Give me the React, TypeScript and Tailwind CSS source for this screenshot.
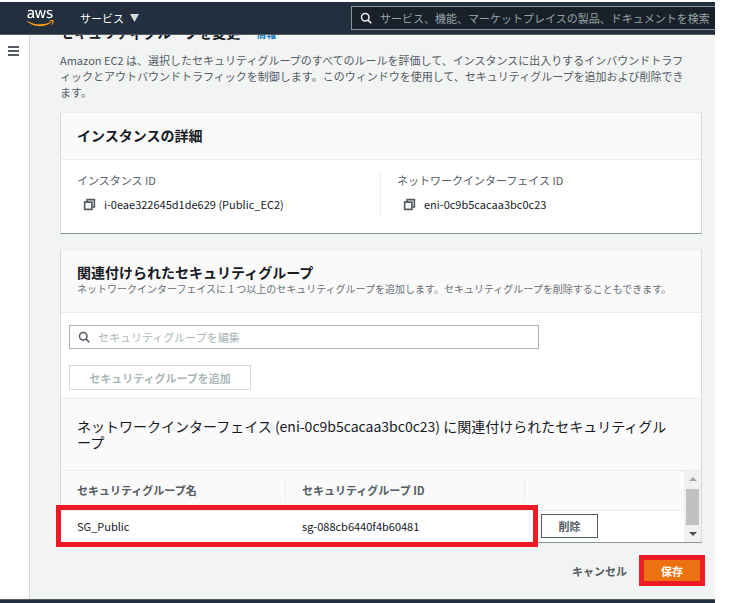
import type { ReactNode } from 'react';
import { FaAws } from 'react-icons/fa';

function SearchIcon({ className }: { className: string }) {
  return (
    <svg viewBox="0 0 16 16" className={className} fill="none" stroke="currentColor" strokeWidth="2" aria-hidden="true">
      <circle cx="7" cy="7" r="5" />
      <path d="M10.8 10.8 15 15" strokeWidth="2.2" />
    </svg>
  );
}

function CopyIcon() {
  return (
    <svg viewBox="0 0 16 16" className="size-[13px]" fill="none" stroke="currentColor" strokeWidth="2" aria-hidden="true">
      <path d="M2 5h9v9H2z" />
      <path d="M5 5V2h9v9h-3" />
    </svg>
  );
}

function Detail({ label, value }: { label: string; value: string }) {
  return (
    <div>
      <dt className="text-[#545b64]">{label}</dt>
      <dd className="mt-2 flex items-center gap-2 pl-[6px] text-[#16191f]">
        <button type="button" aria-label="コピー" className="text-[#545b64]">
          <CopyIcon />
        </button>
        {value}
      </dd>
    </div>
  );
}

function Card({ header, children }: { header: ReactNode; children: ReactNode }) {
  return (
    <section className="border border-t-[#eaeded] border-r-[#d5dbdb] border-b-[#879596] border-l-[#d5dbdb] bg-white">
      <div className="border-b border-[#eaeded] bg-[#fafafa] px-4 pt-[13px] pb-[15px]">{header}</div>
      {children}
    </section>
  );
}

function Scrollbar() {
  return (
    <div className="flex w-[17px] flex-col items-center justify-between bg-[#f1f1f1] py-[6px]" aria-hidden="true">
      <svg viewBox="0 0 8 4" className="h-1 w-2 fill-[#a3a3a3]">
        <path d="M0 4 4 0l4 4z" />
      </svg>
      <div className="h-9 w-[13px] bg-[#c1c1c1]" />
      <svg viewBox="0 0 8 4" className="h-1 w-2 fill-[#505050]">
        <path d="m0 0 4 4 4-4z" />
      </svg>
    </div>
  );
}

export default function App() {
  return (
    <div className="flex h-screen flex-col overflow-hidden bg-white pt-[2px] pr-[14px] font-['Noto_Sans_CJK_JP',sans-serif] text-[11px] leading-4">
      <svg className="absolute size-0" aria-hidden="true">
        <defs>
          <linearGradient id="aws-logo" x1="0" y1="0" x2="0" y2="1">
            <stop offset="0.64" stopColor="#ffffff" />
            <stop offset="0.64" stopColor="#ff9900" />
          </linearGradient>
        </defs>
      </svg>

      <header className="flex h-[33px] shrink-0 items-center overflow-hidden border-b border-[#545b64] bg-[#232f3e] text-white">
        <a href="#home" aria-label="AWS" className="ml-[26px]">
          <FaAws className="h-[22px] w-[28px]" fill="url(#aws-logo)" />
        </a>
        <button type="button" className="ml-[26px] flex items-center gap-[6px]">
          サービス
          <svg viewBox="0 0 9 8" className="h-2 w-[9px] fill-[#d5dbdb]" aria-hidden="true">
            <path d="M0 0h9L4.5 8z" />
          </svg>
        </button>
        <label className="ml-auto flex h-6 w-[364px] items-center gap-2 border border-r-0 border-[#879596] bg-[#1a2029] pl-2">
          <SearchIcon className="size-3 shrink-0 text-[#eaeded]" />
          <input
            type="text"
            aria-label="検索"
            placeholder="サービス、機能、マーケットプレイスの製品、ドキュメントを検索"
            className="min-w-0 flex-1 bg-transparent outline-none placeholder:text-[#95a5a6]"
          />
        </label>
      </header>

      <div className="flex min-h-0 flex-1">
        <nav className="w-[30px] shrink-0 border-r border-[#d5dbdb] pt-[11px] pl-2">
          <button type="button" aria-label="メニュー" className="block">
            <svg viewBox="0 0 11 10" className="h-[10px] w-[11px]" stroke="#545b64" strokeWidth="2" aria-hidden="true">
              <path d="M0 1h11M0 5h11M0 9h11" />
            </svg>
          </button>
        </nav>

        <main className="min-w-0 flex-1 overflow-hidden bg-[#f2f3f3] pr-[13px] pl-[30px]">
          <div className="-mt-3 flex h-[18px] items-baseline gap-4">
            <h1 className="text-[14px] leading-[18px] font-bold text-[#16191f]">セキュリティグループを変更</h1>
            <a href="#info" className="text-[10px] leading-[18px] font-bold text-[#0073bb]">
              情報
            </a>
          </div>
          <p className="mt-[11px] mb-3 pr-[10px] text-[#545b64]">
            Amazon EC2 は、選択したセキュリティグループのすべてのルールを評価して、インスタンスに出入りするインバウンドトラフィックとアウトバウンドトラフィックを制御します。このウィンドウを使用して、セキュリティグループを追加および削除できます。
          </p>

          <div className="flex flex-col gap-[15px]">
            <Card header={<h2 className="text-[14px] leading-[18px] font-bold text-[#16191f]">インスタンスの詳細</h2>}>
              <dl className="grid grid-cols-2 px-4 pt-3 pb-[17px]">
                <div className="border-r border-[#eaeded] pb-1">
                  <Detail label="インスタンス ID" value="i-0eae322645d1de629 (Public_EC2)" />
                </div>
                <div className="pl-4">
                  <Detail label="ネットワークインターフェイス ID" value="eni-0c9b5cacaa3bc0c23" />
                </div>
              </dl>
            </Card>

            <Card
              header={
                <>
                  <h2 className="text-[14px] leading-[18px] font-bold text-[#16191f]">関連付けられたセキュリティグループ</h2>
                  <p className="text-[10px] text-[#687078]">
                    ネットワークインターフェイスに 1 つ以上のセキュリティグループを追加します。セキュリティグループを削除することもできます。
                  </p>
                </>
              }
            >
              <div className="px-2 pt-3 pb-2">
                <label className="flex h-6 max-w-[470px] items-center gap-2 border border-[#aab7b8] bg-white pl-2">
                  <SearchIcon className="size-3 shrink-0 text-[#545b64]" />
                  <input
                    type="text"
                    aria-label="セキュリティグループを編集"
                    placeholder="セキュリティグループを編集"
                    className="min-w-0 flex-1 outline-none placeholder:text-[#aab7b8]"
                  />
                </label>
                <button
                  type="button"
                  disabled
                  className="mt-4 block h-[25px] w-[182px] border border-[#d5dbdb] font-bold text-[#aab7b8]"
                >
                  セキュリティグループを追加
                </button>
              </div>

              <div className="border-y border-[#eaeded] bg-[#fafafa] pt-[19px] pr-7 pb-5 pl-4">
                <h3 className="text-[14px] leading-4 text-[#16191f]">
                  ネットワークインターフェイス (eni-0c9b5cacaa3bc0c23) に関連付けられたセキュリティグループ
                </h3>
              </div>

              <div className="relative flex">
                <table className="flex-1 table-fixed border-collapse text-left">
                  <colgroup>
                    <col className="w-[225px]" />
                    <col className="w-[239px]" />
                    <col />
                  </colgroup>
                  <thead className="border-b border-[#eaeded] bg-[#fafafa] text-[#545b64]">
                    <tr className="h-[39px]">
                      <th className="py-0">
                        <div className="border-r border-[#eaeded] py-[2px] pl-4">セキュリティグループ名</div>
                      </th>
                      <th className="py-0">
                        <div className="border-r border-[#eaeded] py-[2px] pl-4">セキュリティグループ ID</div>
                      </th>
                      <th aria-label="操作" />
                    </tr>
                  </thead>
                  <tbody className="text-[#16191f]">
                    <tr className="h-8">
                      <td className="pl-4">SG_Public</td>
                      <td className="pl-4">sg-088cb6440f4b60481</td>
                      <td className="pl-4">
                        <button
                          type="button"
                          className="block h-6 w-[57px] border border-[#545b64] bg-white font-bold text-[#545b64]"
                        >
                          削除
                        </button>
                      </td>
                    </tr>
                  </tbody>
                </table>
                <Scrollbar />
                <div className="absolute top-[34px] -left-[5px] h-[42px] w-[482px] border-5 border-[#ed1c24]" />
              </div>
            </Card>
          </div>

          <div className="mt-3 flex items-center justify-end pr-px">
            <button type="button" className="px-3 font-bold text-[#545b64]">
              キャンセル
            </button>
            <div className="-mr-1 border-5 border-[#ed1c24]">
              <button type="button" className="block h-[21px] w-14 bg-[#ec7211] font-bold text-white">
                保存
              </button>
            </div>
          </div>
        </main>
      </div>

      <footer className="h-1 shrink-0 border-t border-[#545b64] bg-[#232f3e]" />
    </div>
  );
}
